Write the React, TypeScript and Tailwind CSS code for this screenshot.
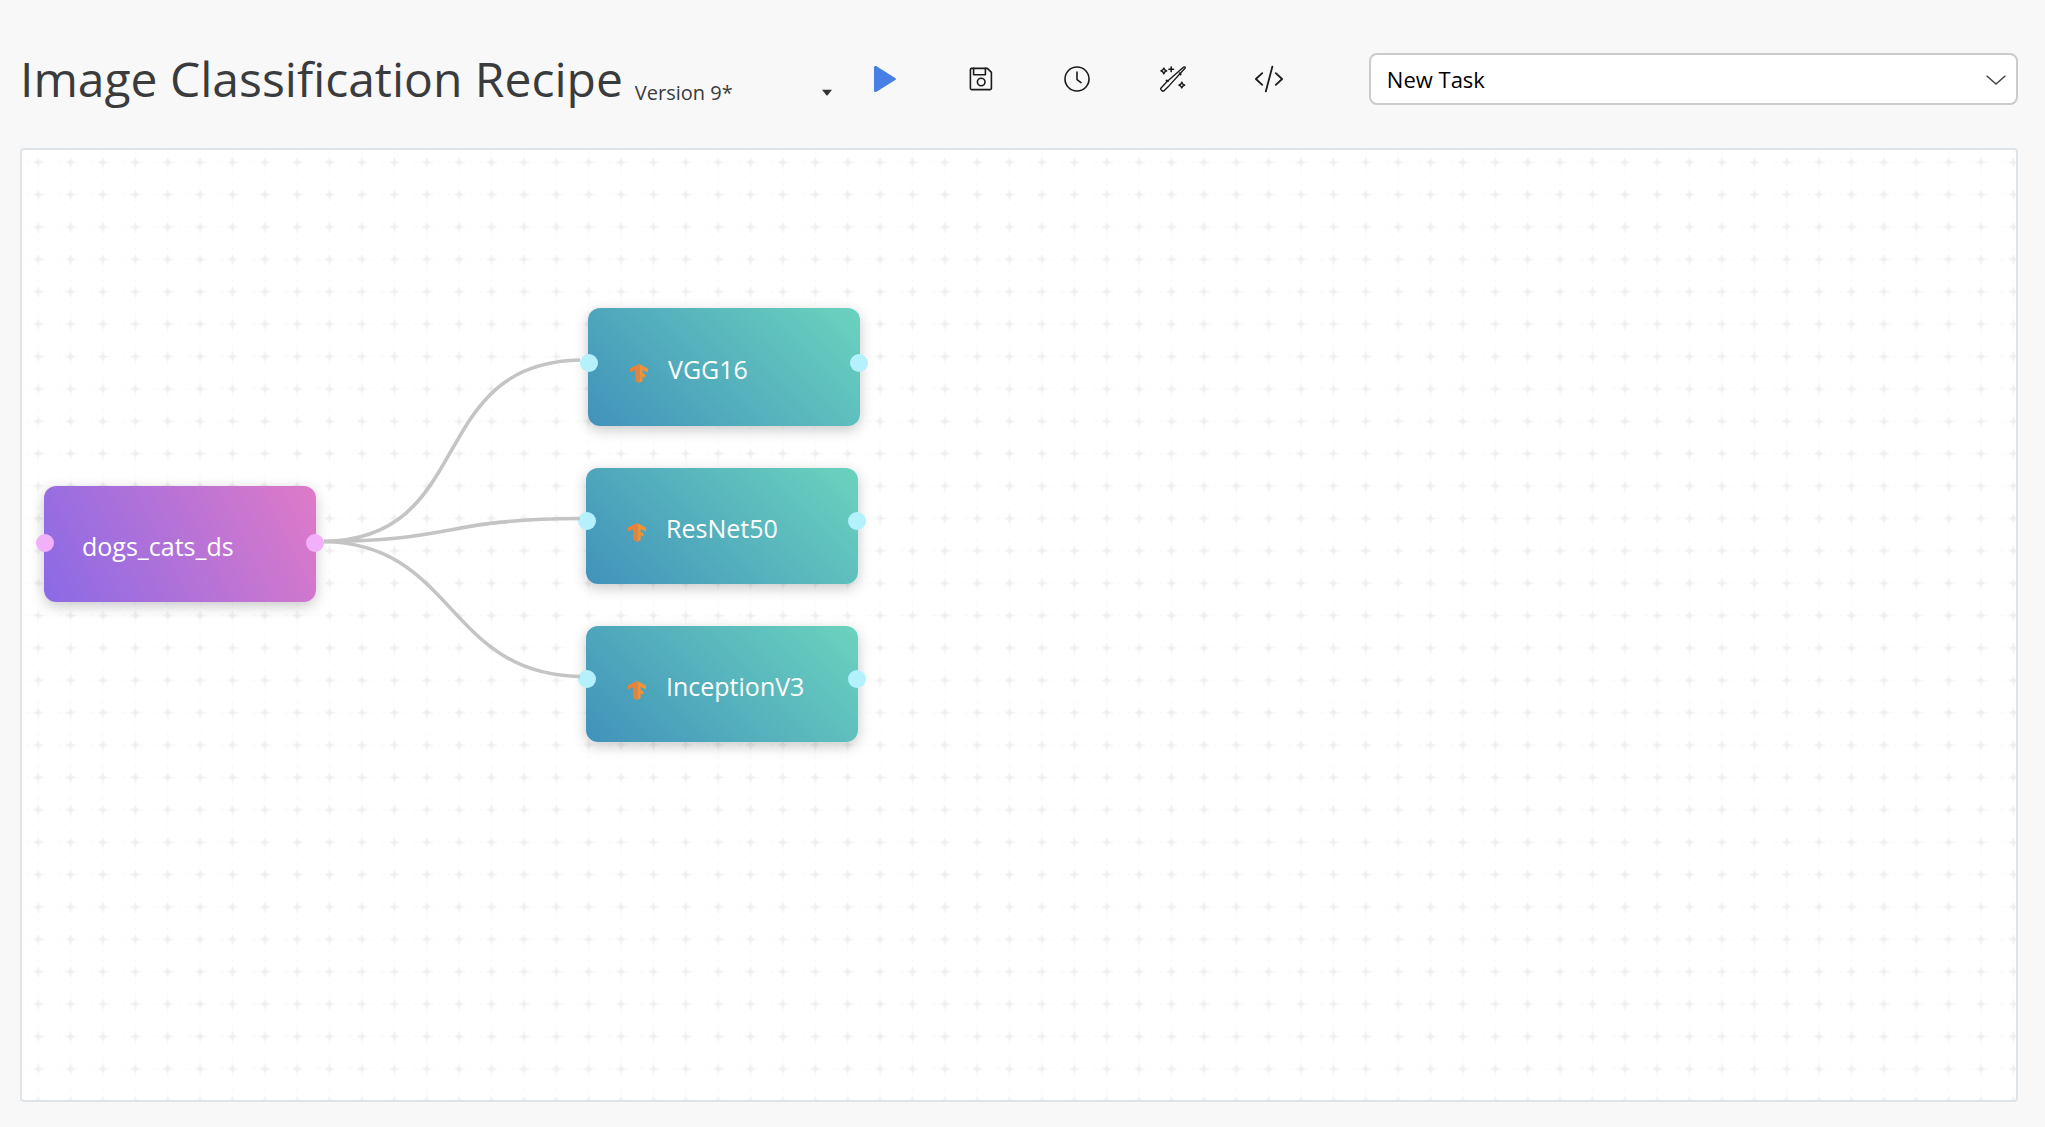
import React from "react";

type Kind = "dataset" | "model";

interface FlowNode {
  id: string;
  label: string;
  kind: Kind;
  place: string;
  port: string;
}

const nodes: FlowNode[] = [
  { id: "ds", label: "dogs_cats_ds", kind: "dataset", place: "left-[22px] top-[336px] h-[116px]", port: "top-12" },
  { id: "vgg", label: "VGG16", kind: "model", place: "left-[566px] top-[158px] h-[118px]", port: "top-[46px]" },
  { id: "resnet", label: "ResNet50", kind: "model", place: "left-[564px] top-[318px] h-[116px]", port: "top-11" },
  { id: "inception", label: "InceptionV3", kind: "model", place: "left-[564px] top-[476px] h-[116px]", port: "top-11" },
];

const links = [
  "M298 391.5C458 391.5 400 210 562 210",
  "M298 391.5C434 391.5 420 368.5 562 368.5",
  "M298 391.5C436 391.5 422 526.5 562 526.5",
];

const stroke = {
  fill: "none",
  stroke: "#1b1b1b",
  strokeWidth: 1.6,
  strokeLinecap: "round" as const,
  strokeLinejoin: "round" as const,
};

function PlayIcon() {
  return (
    <svg viewBox="0 0 28 28" className="size-7" aria-hidden="true">
      <path d="M3 2.6C3 1.2 4.4.5 5.6 1.3L24.2 12.9C25.2 13.6 25.2 14.5 24.2 15.1L5.6 26.7C4.4 27.5 3 26.8 3 25.4Z" fill="#4680e4" />
    </svg>
  );
}

function SaveIcon() {
  return (
    <svg viewBox="0 0 28 28" className="size-7" aria-hidden="true" {...stroke}>
      <path d="M4.8 3.4H20.4L24.4 7.4V23.2A1.4 1.4 0 0 1 23 24.6H4.8A1.4 1.4 0 0 1 3.4 23.2V4.8A1.4 1.4 0 0 1 4.8 3.4Z" />
      <path d="M6.6 3.4V9.8H18.4V3.4" />
      <circle cx="14.2" cy="17" r="3.8" />
    </svg>
  );
}

function ClockIcon() {
  return (
    <svg viewBox="0 0 28 28" className="size-7" aria-hidden="true" {...stroke}>
      <circle cx="14" cy="14" r="12" />
      <path d="M14 7V14.6L18 17.6" />
    </svg>
  );
}

function WandIcon() {
  return (
    <svg viewBox="0 0 28 28" className="size-7" aria-hidden="true" {...stroke} strokeWidth={1.4}>
      <path d="M1.6 23.4L7.6 17L24.4 2.2C25.2 1.5 26.6 2 26.2 3L10.4 20.4L4.8 26C4 26.8 1 24.4 1.6 23.4Z" />
      <path d="M7.6 15.6L9 16M21.6 9.4L20.8 8.4" strokeWidth={2} />
      <path d="M4.8 3L5.8 4.9L7.7 5.9L5.8 6.9L4.8 8.8L3.8 6.9L1.9 5.9L3.8 4.9Z" />
      <path d="M12.2 2V6.6M9.9 4.3H14.5" strokeWidth={1.6} />
      <path d="M22.8 17.2L23.8 19.1L25.7 20.1L23.8 21.1L22.8 23L21.8 21.1L19.9 20.1L21.8 19.1Z" />
    </svg>
  );
}

function CodeIcon() {
  return (
    <svg viewBox="0 0 28 28" className="size-7" aria-hidden="true" {...stroke} strokeWidth={1.8}>
      <path d="M7.2 8.2L.9 14L7.2 19.8M20.8 8.2L27.1 14L20.8 19.8M17.4 1.6L10.8 26.4" />
    </svg>
  );
}

function TensorIcon() {
  return (
    <svg viewBox="0 0 18 19" className="h-[19px] w-[18px] shrink-0" aria-hidden="true">
      <path d="M8.8 0L0 4.6V8.6L5.4 6V17L8.8 19Z" fill="#ee7f33" />
      <path d="M9.2 0L18 4.6V8.6L12.6 6V9L15.4 10.4V13.8L12.6 12.4V17L9.2 19Z" fill="#f0923a" />
      <path d="M8.2 .4L9 0L9.8 .4V18.6L9 19L8.2 18.6Z" fill="#cf8a52" />
    </svg>
  );
}

const tools = [
  { name: "Run", icon: <PlayIcon /> },
  { name: "Save", icon: <SaveIcon /> },
  { name: "History", icon: <ClockIcon /> },
  { name: "Auto arrange", icon: <WandIcon /> },
  { name: "View code", icon: <CodeIcon /> },
];

function GridBackdrop() {
  return (
    <svg className="absolute inset-0 size-full" aria-hidden="true">
      <defs>
        <pattern id="grid" x="0" y="-4" width="32.38" height="32.38" patternUnits="userSpaceOnUse">
          <path d="M3 16.2H29.4M16.2 3V29.4" stroke="#fafafa" strokeWidth="1.4" strokeDasharray="5 3" />
          <path d="M16.2 12L17.6 14.8L20.4 16.2L17.6 17.6L16.2 20.4L14.8 17.6L12 16.2L14.8 14.8Z" fill="#efefef" stroke="#f4f4f4" />
        </pattern>
      </defs>
      <rect width="100%" height="100%" fill="url(#grid)" />
    </svg>
  );
}

function NodeCard({ node }: { node: FlowNode }) {
  const model = node.kind === "model";
  const port = model ? "bg-[#b4f1fd]" : "bg-[#f2affa]";
  return (
    <div
      className={`absolute flex w-[272px] items-center rounded-xl text-[25px] leading-9 text-white shadow-[0_4px_14px_rgba(0,0,0,0.22)] ${node.place} ${
        model
          ? "gap-5 bg-linear-[45deg,#4192bb,#6bd3be] pl-[42px] pt-3"
          : "bg-linear-[64deg,#8a6ae6,#df7ac8] pl-[38px] pt-1"
      }`}
    >
      {model && <TensorIcon />}
      <span className={model ? "-mt-2" : ""}>{node.label}</span>
      <span className={`absolute -left-2 size-[18px] rounded-full ${port} ${node.port}`} />
      <span className={`absolute -right-2 size-[18px] rounded-full ${port} ${node.port}`} />
    </div>
  );
}

export default function App() {
  return (
    <div className="flex min-h-screen flex-col bg-[#f8f8f8] pb-[25px] pl-5 pr-[27px] font-['Open_Sans','Noto_Sans',sans-serif] text-[#3a3b3c]">
      <header className="flex h-[148px] items-center pt-2.5">
        <h1 className="whitespace-nowrap text-[48px] leading-[64px]">Image Classification Recipe</h1>
        <div className="relative ml-3 mt-7 w-[198px] shrink-0">
          <select aria-label="Version" className="h-8 w-full appearance-none bg-transparent text-[20px] outline-none">
            <option>Version 9*</option>
          </select>
          <svg viewBox="0 0 12 8" className="pointer-events-none absolute right-0 top-3 h-2 w-3" aria-hidden="true">
            <path d="M1 .8H11L6.6 6.2Q6 6.8 5.4 6.2Z" fill="#333" />
          </svg>
        </div>
        <nav aria-label="Recipe actions" className="flex shrink-0 pl-1">
          {tools.map((t) => (
            <button key={t.name} type="button" aria-label={t.name} className="flex h-12 w-24 items-center justify-center">
              {t.icon}
            </button>
          ))}
        </nav>
        <div className="relative ml-[52px] flex-1">
          <select
            aria-label="Task"
            className="h-[52px] w-full appearance-none rounded-lg border-2 border-[#cbcbcb] bg-white pl-4 pr-12 text-[22px] text-black outline-none"
          >
            <option>New Task</option>
          </select>
          <svg viewBox="0 0 20 10" className="pointer-events-none absolute right-3 top-[22px] h-2.5 w-5" fill="none" stroke="#444" strokeWidth="1.5" aria-hidden="true">
            <path d="M.6 .8L10 9L19.4 .8" />
          </svg>
        </div>
      </header>
      <main className="relative flex-1 overflow-hidden rounded border-2 border-[#dee4e8] bg-white">
        <GridBackdrop />
        {nodes.map((n) => (
          <NodeCard key={n.id} node={n} />
        ))}
        <svg className="pointer-events-none absolute left-0 top-0 h-[600px] w-[564px]" viewBox="0 0 564 600" fill="none" stroke="#c4c4c4" strokeWidth="3.6" aria-hidden="true">
          <defs>
            <clipPath id="between-ports">
              <rect x="302" y="0" width="256" height="600" />
            </clipPath>
          </defs>
          <g clipPath="url(#between-ports)">
            {links.map((d) => (
              <path key={d} d={d} />
            ))}
          </g>
        </svg>
      </main>
    </div>
  );
}
